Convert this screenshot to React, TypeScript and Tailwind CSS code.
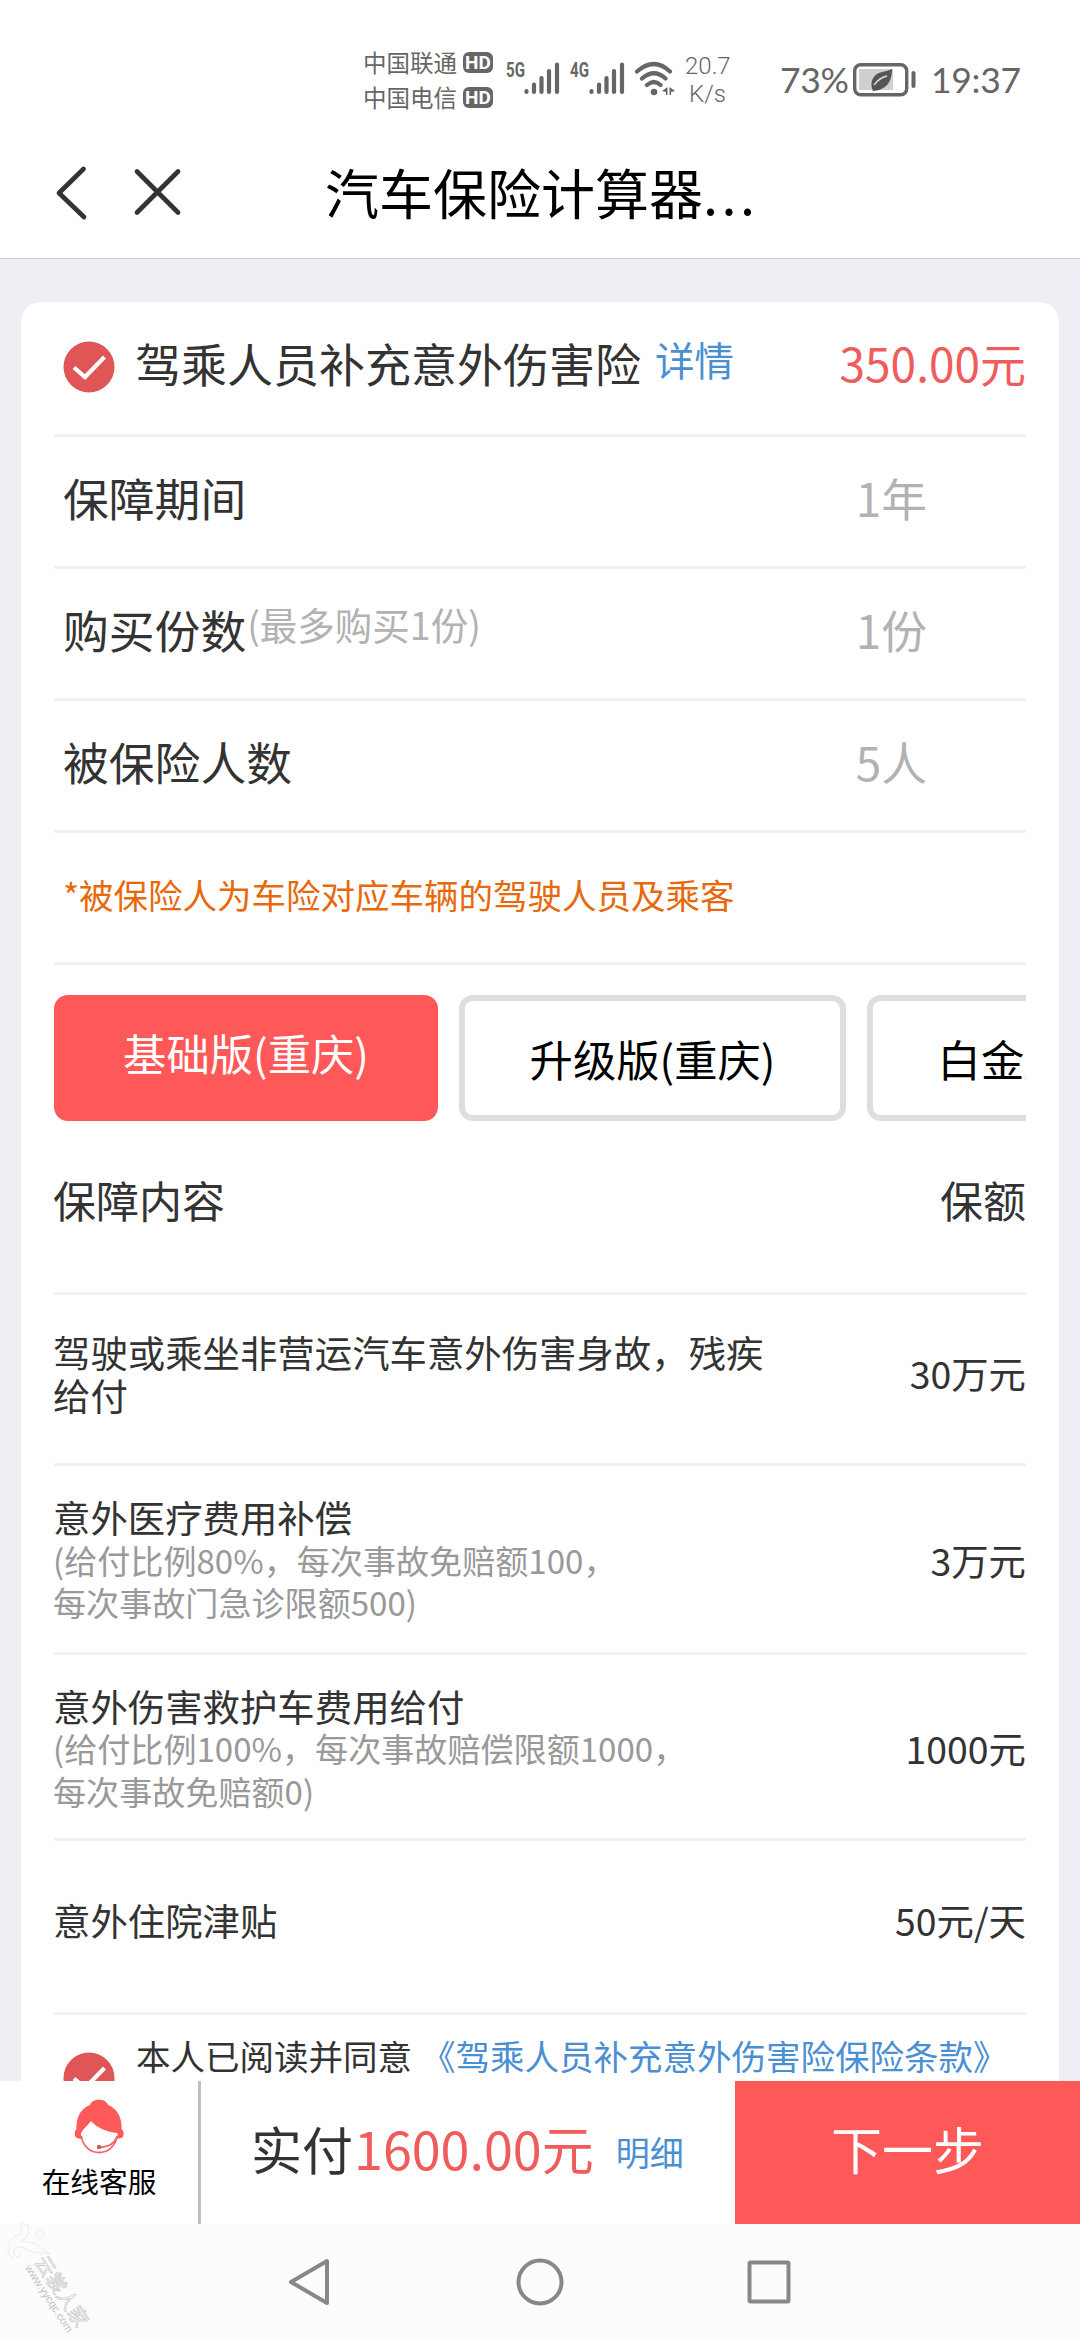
import type { ReactNode } from "react";

const infoRows = [
  { label: "保障期间", value: "1年" },
  { label: "购买份数", hint: "(最多购买1份)", value: "1份" },
  { label: "被保险人数", value: "5人" },
];

const SignalBars = () => (
  <svg width="36" height="34" viewBox="0 0 36 34" stroke="#666" strokeWidth="4.2" strokeLinecap="round">
    <path d="M2.5 30.2v.8M10 23.500v7.500M17.500 17v14M25 10v21M33 3.500v27.500" />
  </svg>
);

const HdBadge = () => (
  <span className="flex h-[21px] w-[30px] items-center justify-center rounded-[6px] bg-[#666] font-['Roboto',sans-serif] text-[19px] leading-none font-bold text-white">
    HD
  </span>
);

function StatusBar() {
  return (
    <div className="flex h-[140px] items-start pl-[363px] text-[#666]">
      <div className="mt-[45px] flex w-[131px] flex-col">
        <div className="flex h-[35px] items-center gap-[6px] text-[23.5px]">
          <span className="w-[94px] whitespace-nowrap">中国联通</span>
          <HdBadge />
        </div>
        <div className="flex h-[35px] items-center gap-[6px] text-[23.5px]">
          <span className="w-[94px] whitespace-nowrap">中国电信</span>
          <HdBadge />
        </div>
      </div>
      <div className="mt-[61px] ml-[12px] flex w-[64px]">
        <span className="w-[18px] origin-left scale-x-[0.72] font-['Roboto',sans-serif] text-[21px] leading-[18px] font-bold">5G</span>
        <SignalBars />
      </div>
      <div className="mt-[61px] flex w-[64px]">
        <span className="w-[19px] origin-left scale-x-[0.72] font-['Roboto',sans-serif] text-[21px] leading-[18px] font-bold">4G</span>
        <SignalBars />
      </div>
      <svg className="mt-[60px]" width="42" height="38" viewBox="0 0 42 38" fill="none" stroke="#666" strokeWidth="4.200" strokeLinecap="round">
        <path d="M3 11.500Q20 -3.500 36 11.500M8 18.500Q20 8 31.500 18.500M13 25Q20 19 26.500 25" />
        <circle cx="20" cy="32" r="3.300" fill="#666" stroke="none" />
        <path d="M33.500 27v8h-1.500v-3l-4-1zM35.500 27v8h1.500v-3l4-1z" fill="#666" stroke="none" />
      </svg>
      <div className="mt-[52px] ml-[9px] w-[45px] text-center font-['Roboto',sans-serif] text-[24px] leading-[28px] font-light">
        <div>20.7</div>
        <div>K/s</div>
      </div>
      <span className="mt-[58px] ml-[50px] w-[73px] font-['Lato',sans-serif] text-[35.500px] leading-[44px] tracking-[-0.300px] whitespace-nowrap">73%</span>
      <svg className="mt-[62px]" width="66" height="36" viewBox="0 0 66 36">
        <rect x="1.700" y="2.700" width="52" height="30" rx="6" fill="none" stroke="#666" strokeWidth="3.400" />
        <rect x="6" y="7" width="34" height="21" fill="#cfcfcf" />
        <path d="M20 29C16 20 20 12 29 10q6-1 10-3c0 12-5 21-19 22z" fill="#555" />
        <path d="M21 23q5-7 13-9" fill="none" stroke="#ddd" strokeWidth="1.300" />
        <path d="M60.500 11v13" stroke="#666" strokeWidth="4" strokeLinecap="round" />
      </svg>
      <span className="mt-[58px] ml-[12px] font-['Lato',sans-serif] text-[35.500px] leading-[44px] tracking-[-0.300px] whitespace-nowrap">19:37</span>
    </div>
  );
}

function NavHeader() {
  return (
    <header className="flex h-[119px] items-start border-b border-[#ccc]">
      <svg className="mt-[20px] ml-[48px]" width="140" height="66" viewBox="0 0 140 66" fill="none" stroke="#333" strokeWidth="4.700" strokeLinecap="round" strokeLinejoin="round">
        <path d="M35.500 9L11 33l25 24M89 11.500l41 41M130 11.500L89 52.500" />
      </svg>
      <h1 className="mt-[12px] ml-[137px] text-[54px] leading-[80px] whitespace-nowrap text-black">
        汽车保险计算器<span className="tracking-[3.500px]">...</span>
      </h1>
    </header>
  );
}

const CheckIcon = () => (
  <svg className="shrink-0" width="52" height="52" viewBox="0 0 52 52">
    <circle cx="26" cy="26" r="25.500" fill="#e05555" />
    <path d="M11 26.500l11 9.500L41.500 16" fill="none" stroke="#fff" strokeWidth="4.200" />
  </svg>
);

function BenefitRow({ className, amount, children }: { className: string; amount: string; children: ReactNode }) {
  return (
    <div className={`flex items-center justify-between border-b-[3px] border-[#f2f2f2] text-[37.400px] leading-[42.500px] ${className}`}>
      <div>{children}</div>
      <div className="whitespace-nowrap">{amount}</div>
    </div>
  );
}

function InsuranceCard() {
  return (
    <section className="rounded-t-[20px] bg-white pr-[33px] pl-[33px] text-[#333]">
      <div className="flex h-[135px] items-start border-b-[3px] border-[#f2f2f2] pl-[9px]">
        <div className="mt-[39px] h-[52px]">
          <CheckIcon />
        </div>
        <h2 className="mt-[26px] ml-[20px] text-[46px] leading-[68px]">驾乘人员补充意外伤害险</h2>
        <a className="mt-[30px] ml-[14px] text-[39.500px] leading-[54px] text-[#4a8fd3]">详情</a>
        <span className="mt-[26px] ml-auto text-[46px] leading-[68px] text-[#f05b5b]">350.00元</span>
      </div>

      {infoRows.map((row) => (
        <div key={row.label} className="flex h-[132px] items-center border-b-[3px] border-[#f2f2f2] pb-[8px] pl-[9px] text-[45.800px]">
          <span>{row.label}</span>
          <span className="mb-[10px] ml-px text-[37.500px] text-[#b2b2b2]">{row.hint}</span>
          <span className="mr-[99px] ml-auto text-[#b2b2b2]">{row.value}</span>
        </div>
      ))}

      <div className="flex h-[132px] items-center border-b-[3px] border-[#f2f2f2] pb-[6px] pl-[9px] text-[34.500px] text-[#e8690b]">
        *被保险人为车险对应车辆的驾驶人员及乘客
      </div>

      {/* Plan tabs, scrolls sideways */}
      <div className="mt-[30px] flex h-[126px] gap-[21px] overflow-hidden text-[43.300px] whitespace-nowrap">
        <button className="w-[384px] shrink-0 rounded-[14px] bg-[#ff5858] pb-[12px] text-white">基础版(重庆)</button>
        <button className="w-[387px] shrink-0 rounded-[14px] border-[6px] border-[#dedede] text-black">升级版(重庆)</button>
        <button className="w-[387px] shrink-0 rounded-[14px] border-[6px] border-[#dedede] text-black">白金版(重庆)</button>
      </div>

      <div className="flex h-[174px] items-start justify-between border-b-[3px] border-[#f2f2f2] pt-[46px] text-[43px] leading-[64px]">
        <span className="-ml-px">保障内容</span>
        <span>保额</span>
      </div>

      <BenefitRow className="h-[171px] pb-[11px]" amount="30万元">
        <p className="-ml-px w-[720px]">驾驶或乘坐非营运汽车意外伤害身故，残疾给付</p>
      </BenefitRow>
      <BenefitRow className="h-[189px] pt-[2px]" amount="3万元">
        <p className="-ml-px">意外医疗费用补偿</p>
        <p className="-ml-px text-[33.100px] text-[#999]">
          (给付比例80%，每次事故免赔额100，
          <br />
          每次事故门急诊限额500)
        </p>
      </BenefitRow>
      <BenefitRow className="h-[186px] pt-[4px]" amount="1000元">
        <p className="-ml-px">意外伤害救护车费用给付</p>
        <p className="-ml-px text-[33.100px] text-[#999]">
          (给付比例100%，每次事故赔偿限额1000，
          <br />
          每次事故免赔额0)
        </p>
      </BenefitRow>
      <BenefitRow className="h-[174px] pb-[12px]" amount="50元/天">
        <p className="-ml-px">意外住院津贴</p>
      </BenefitRow>

      <div className="flex items-start pl-[9px]">
        <div className="mt-[37px]">
          <CheckIcon />
        </div>
        <p className="mt-[13px] ml-[21px] text-[34.500px] leading-[54px] whitespace-nowrap">
          本人已阅读并同意<a className="ml-[9px] text-[#4a8fd3]">《驾乘人员补充意外伤害险保险条款》</a>
        </p>
      </div>
    </section>
  );
}

const ServiceIcon = () => (
  <svg width="50" height="56" viewBox="0 0 50 56">
    <path
      d="M16 6C18-1 32-1 34 6c10 4 14 13 13.500 24 3 2 3 8-.500 9l-4 1c1-3 1-5 0-6C33 33 23 29 17 22c-3 4-8 8-10 12l0 6-4-1c-3-1-3-7-.500-9C2 19 6 10 16 6z"
      fill="#ff5a5a"
    />
    <path d="M7.500 37C10 59 40 59 43 37c-2 8-9 11-18 11.500" fill="none" stroke="#ec6a6a" strokeWidth="1.800" />
    <circle cx="25" cy="48" r="2.200" fill="#d95555" />
  </svg>
);

function PayBar() {
  return (
    <footer className="flex h-[143px] bg-white">
      <div className="flex w-[201px] flex-col items-center border-r-[3px] border-[#bebebe] pt-[18px] text-black">
        <ServiceIcon />
        <span className="mt-[5px] text-[28.700px] leading-[42px]">在线客服</span>
      </div>
      <div className="flex flex-1 items-center pb-[9px] pl-[50px] text-[51px] whitespace-nowrap text-[#333]">
        实付<span className="ml-px text-[52px] text-[#f05b5b]">1600.00元</span>
        <a className="mt-[6px] ml-[22px] text-[34px] text-[#4a8fd3]">明细</a>
      </div>
      <button className="w-[345px] bg-[#ff5858] pb-[9px] text-[51px] text-white">下一步</button>
    </footer>
  );
}

const Watermark = () => (
  <>
    <svg className="absolute -top-[4px] left-[6px]" width="48" height="44" viewBox="0 0 48 44" fill="none" stroke="#f6ecec" strokeWidth="1.200">
      <path d="M14 3l8 2c2 9-1 13-6 16 12 0 18 6 28 13-11-2-18 0-24-5-8-5-14 0-12 5s8 3 6-1M8 39C-2 32 1 18 13 15c3-3 3-7 1-12" />
      <circle cx="34" cy="14" r="4" />
    </svg>
    <div className="absolute top-[28px] left-[49px] origin-top-left rotate-[57deg] whitespace-nowrap text-[#c4c4c4]">
      <div className="text-[20px] leading-[20px] text-[#fcfcfc] [-webkit-text-stroke:0.7px_#c8c8c8]">云裳人家</div>
      <div className="font-['Liberation_Sans',sans-serif] text-[11px] leading-[11px]">www.yycqc.com</div>
    </div>
  </>
);

export default function App() {
  return (
    <main className="flex h-[2340px] w-[1080px] flex-col overflow-hidden bg-white font-['Noto_Sans_CJK_SC',sans-serif]">
      <StatusBar />
      <NavHeader />
      <div className="h-[1822px] overflow-hidden bg-[#eeeef4] px-[21px] pt-[43px]">
        <InsuranceCard />
      </div>
      <PayBar />
      <nav className="relative h-[116px] bg-[#fcfcfc]">
        <svg width="1080" height="116" viewBox="0 0 1080 116" fill="none" stroke="#888" strokeWidth="4" strokeLinejoin="round">
          <path d="M291 58l36-21v42z" />
          <circle cx="540" cy="58" r="21.500" />
          <rect x="749.500" y="38.500" width="39" height="39" rx="1" />
        </svg>
        <Watermark />
      </nav>
    </main>
  );
}
